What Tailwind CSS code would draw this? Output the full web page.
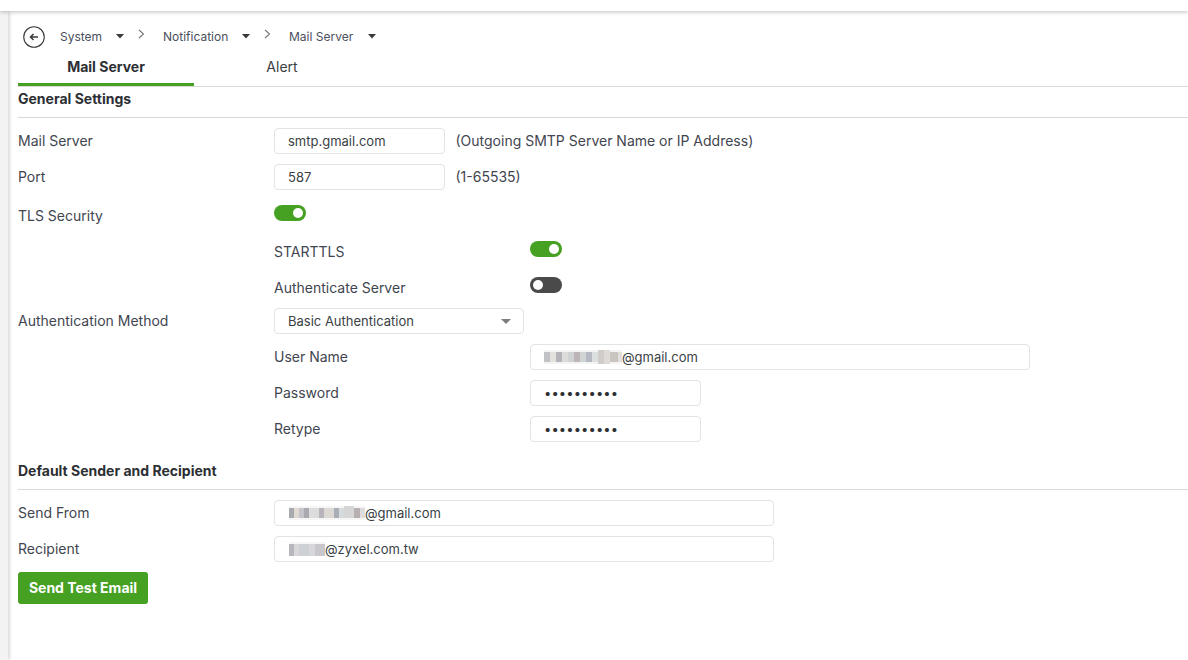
<!DOCTYPE html>
<html>
<head>
<meta charset="utf-8">
<script src="https://cdn.jsdelivr.net/npm/@tailwindcss/browser@4"></script>
</head>
<body class="bg-white font-['Inter',sans-serif] text-[14px] text-[#3f4650] overflow-hidden">
<div class="w-[1188px] h-[660px] flex flex-col overflow-hidden">
  <div class="h-[11px] bg-white relative z-10 shadow-[0_1px_4px_rgba(0,0,0,0.25)] shrink-0"></div>
  <div class="flex flex-1 min-h-0">
    <div class="w-[8px] bg-[#f3f3f3] shadow-[1px_0_4px_rgba(0,0,0,0.2)] shrink-0"></div>
    <main class="flex-1 pl-[10px]">
      <!-- breadcrumb -->
      <div class="h-[48px] flex items-start pt-[15px] pl-[5px] text-[12px] leading-[21px] text-[#4a4f5c]">
        <svg width="22" height="22" viewBox="0 0 22 22" class="shrink-0" fill="none" stroke="#3a3a3a"><circle cx="11" cy="11" r="10.25" stroke-width="1.1"/><path d="M15 11H7.5M10.5 8 7.5 11l3 3" stroke-width="1.5"/></svg>
        <span class="ml-[15px] w-[56px]">System</span>
        <svg width="8" height="5" viewBox="0 0 8 5" class="mt-[8px] shrink-0"><path d="M0 0h8L4 4.5z" fill="#3a3a3a"/></svg>
        <svg width="7" height="10" viewBox="0 0 7 10" class="ml-[14px] mt-[3px] shrink-0" fill="none" stroke="#777" stroke-width="1.1"><path d="M1 1l4.5 4L1 9"/></svg>
        <span class="ml-[18px] w-[79px]">Notification</span>
        <svg width="8" height="5" viewBox="0 0 8 5" class="mt-[8px] shrink-0"><path d="M0 0h8L4 4.5z" fill="#3a3a3a"/></svg>
        <svg width="7" height="10" viewBox="0 0 7 10" class="ml-[14px] mt-[3px] shrink-0" fill="none" stroke="#777" stroke-width="1.1"><path d="M1 1l4.5 4L1 9"/></svg>
        <span class="ml-[18px] w-[79px]">Mail Server</span>
        <svg width="8" height="5" viewBox="0 0 8 5" class="mt-[8px] shrink-0"><path d="M0 0h8L4 4.5z" fill="#3a3a3a"/></svg>
      </div>
      <!-- tabs -->
      <div class="flex h-[28px] border-b border-[#d9d9d9]">
        <div class="w-[176px] h-[27px] border-b-[3px] border-[#46a022] text-center font-bold text-[#2c2f33] leading-[16px]">Mail Server</div>
        <div class="w-[176px] text-center leading-[16px] text-[#3a3f45]">Alert</div>
      </div>
      <section class="border-b border-[#d9d9d9] h-[31px] flex items-start pt-[3px]">
        <h2 class="font-bold text-[#2c2f33] leading-[17px]">General Settings</h2>
      </section>
      <div class="pt-[10px]">
        <div class="flex h-[26px] mb-[10px] items-center">
          <label class="w-[256px] -translate-y-px">Mail Server</label>
          <div class="w-[171px] h-[26px] border border-[#e3e3e3] rounded-[4px] pl-[13px] text-[13px] leading-[25px] text-[#3a3f45]">smtp.gmail.com</div>
          <span class="ml-[11px] -translate-x-[0.5px] -translate-y-px">(Outgoing SMTP Server Name or IP Address)</span>
        </div>
        <div class="flex h-[26px] mb-[10px] items-center">
          <label class="w-[256px] -translate-y-px">Port</label>
          <div class="w-[171px] h-[26px] border border-[#e3e3e3] rounded-[4px] pl-[13px] text-[13px] leading-[25px] text-[#3a3f45]">587</div>
          <span class="ml-[11px] -translate-x-[0.5px] -translate-y-px">(1-65535)</span>
        </div>
        <div class="flex h-[26px] mb-[10px] items-center">
          <label class="w-[256px] translate-y-[2px]">TLS Security</label>
          <div class="w-[32px] h-[16px] rounded-full bg-[#46a022] relative"><span class="absolute right-[3px] top-[3px] w-[10px] h-[10px] rounded-full bg-white"></span></div>
        </div>
        <div class="flex h-[26px] mb-[10px] items-center pl-[256px]">
          <label class="w-[256px] translate-y-[2px]">STARTTLS</label>
          <div class="w-[32px] h-[16px] rounded-full bg-[#46a022] relative"><span class="absolute right-[3px] top-[3px] w-[10px] h-[10px] rounded-full bg-white"></span></div>
        </div>
        <div class="flex h-[26px] mb-[10px] items-center pl-[256px]">
          <label class="w-[256px] translate-y-[2px]">Authenticate Server</label>
          <div class="w-[32px] h-[16px] rounded-full bg-[#4a4a4a] relative"><span class="absolute left-[3px] top-[3px] w-[10px] h-[10px] rounded-full bg-white"></span></div>
        </div>
        <div class="flex h-[26px] mb-[10px] items-center">
          <label class="w-[256px] -translate-y-px">Authentication Method</label>
          <div class="w-[250px] h-[26px] border border-[#e3e3e3] rounded-[4px] pl-[13px] pr-[12px] text-[13px] leading-[25px] text-[#3a3f45] flex items-center justify-between">
            <span>Basic Authentication</span>
            <svg width="10" height="5" viewBox="0 0 10 5"><path d="M0 0h10L5 5z" fill="#7d7d7d"/></svg>
          </div>
        </div>
        <div class="flex h-[26px] mb-[10px] items-center pl-[256px]">
          <label class="w-[256px] -translate-y-px">User Name</label>
          <div class="w-[500px] h-[26px] border border-[#e3e3e3] rounded-[4px] pl-[13px] text-[13px] leading-[25px] text-[#3a3f45] flex items-center">
            <svg width="78" height="14" viewBox="0 0 78 14" class="shrink-0"><rect width="78" height="14" fill="#f4f4f3"/><rect x="0" y="2" width="6" height="10" fill="#c2c2c6"/><rect x="6" y="2" width="6" height="10" fill="#e4e0dc"/><rect x="12" y="2" width="6" height="10" fill="#b5b2b8"/><rect x="18" y="2" width="6" height="10" fill="#dcdcdc"/><rect x="24" y="2" width="6" height="10" fill="#cfd2d2"/><rect x="30" y="2" width="6" height="10" fill="#bcb4b6"/><rect x="36" y="2" width="6" height="10" fill="#d0d4d4"/><rect x="42" y="2" width="6" height="10" fill="#b4b9c4"/><rect x="48" y="2" width="6" height="10" fill="#dbe0de"/><rect x="54" y="0" width="6" height="14" fill="#d0ccc9"/><rect x="60" y="0" width="6" height="14" fill="#dedad6"/><rect x="66" y="2" width="8" height="10" fill="#c8c4bf"/><rect x="74" y="2" width="4" height="10" fill="#e2dfdc"/></svg>
            <span>@gmail.com</span>
          </div>
        </div>
        <div class="flex h-[26px] mb-[10px] items-center pl-[256px]">
          <label class="w-[256px] -translate-y-px">Password</label>
          <div class="w-[171px] h-[26px] border border-[#e3e3e3] rounded-[4px] pl-[13px] text-[#2c2f33] leading-[25px] text-[13px] tracking-[0.1px]">••••••••••</div>
        </div>
        <div class="flex h-[26px] items-center pl-[256px]">
          <label class="w-[256px] -translate-y-px">Retype</label>
          <div class="w-[171px] h-[26px] border border-[#e3e3e3] rounded-[4px] pl-[13px] text-[#2c2f33] leading-[25px] text-[13px] tracking-[0.1px]">••••••••••</div>
        </div>
      </div>
      <section class="border-b border-[#d9d9d9] h-[48px] flex items-start pt-[20px]">
        <h2 class="font-bold text-[#2c2f33] leading-[17px]">Default Sender and Recipient</h2>
      </section>
      <div class="pt-[10px]">
        <div class="flex h-[26px] mb-[10px] items-center">
          <label class="w-[256px] -translate-y-px">Send From</label>
          <div class="w-[500px] h-[26px] border border-[#e3e3e3] rounded-[4px] pl-[14px] text-[13px] leading-[25px] text-[#3a3f45] flex items-center">
            <svg width="76" height="14" viewBox="0 0 76 14" class="shrink-0"><rect width="76" height="14" fill="#f6f6f6"/><rect x="0" y="2" width="5" height="10" fill="#a9a9b0"/><rect x="5" y="2" width="5" height="10" fill="#e0dad2"/><rect x="10" y="2" width="5" height="10" fill="#c5c4c8"/><rect x="15" y="2" width="5" height="10" fill="#a8aab0"/><rect x="20" y="2" width="10" height="10" fill="#dcdcdc"/><rect x="30" y="2" width="5" height="10" fill="#b9b4bb"/><rect x="35" y="2" width="10" height="10" fill="#dcd8d4"/><rect x="45" y="2" width="5" height="10" fill="#a9adb5"/><rect x="50" y="2" width="5" height="10" fill="#d5dadc"/><rect x="55" y="0" width="10" height="12" fill="#d7d6d6"/><rect x="65" y="2" width="6" height="10" fill="#b8b0b0"/><rect x="71" y="2" width="5" height="10" fill="#e0dcdc"/></svg>
            <span>@gmail.com</span>
          </div>
        </div>
        <div class="flex h-[26px] mb-[10px] items-center">
          <label class="w-[256px] -translate-y-px">Recipient</label>
          <div class="w-[500px] h-[26px] border border-[#e3e3e3] rounded-[4px] pl-[14px] text-[13px] leading-[25px] text-[#3a3f45] flex items-center">
            <svg width="36" height="14" viewBox="0 0 36 14" class="shrink-0"><rect width="36" height="14" fill="#f6f6f6"/><rect x="0" y="2" width="5" height="12" fill="#b8b6bd"/><rect x="5" y="2" width="5" height="12" fill="#d8d6d8"/><rect x="10" y="2" width="10" height="12" fill="#cdd0d4"/><rect x="20" y="2" width="6" height="12" fill="#d8d8dc"/><rect x="26" y="2" width="10" height="12" fill="#c8c8cc"/></svg>
            <span>@zyxel.com.tw</span>
          </div>
        </div>
        <button class="w-[130px] h-[32px] pb-[2px] rounded-[3px] bg-[#46a022] text-white font-bold text-[14px]">Send Test Email</button>
      </div>
    </main>
  </div>
</div>
</body>
</html>
